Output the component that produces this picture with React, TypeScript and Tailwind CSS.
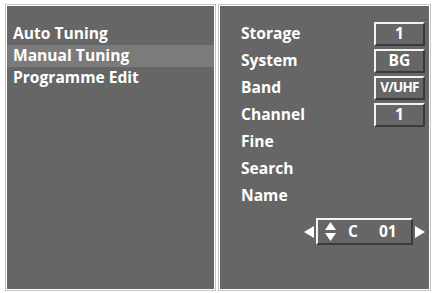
import React from "react";

const font = { fontFamily: '"Open Sans", "Noto Sans", sans-serif' };

function ValBox({ children, narrow }: { children: React.ReactNode; narrow?: boolean }) {
  return (
    <div className="w-[51px] h-[24px] flex items-center justify-center border-t-2 border-l-2 border-t-[#f2f2f2] border-l-[#f2f2f2] border-b-2 border-r-2 border-b-[#3a3a3a] border-r-[#3a3a3a] bg-[#666]">
      <span className={narrow ? "text-[13.5px] tracking-[-0.8px]" : "text-[15.6px]"}>{children}</span>
    </div>
  );
}

export default function App() {
  const rows: [string, React.ReactNode][] = [
    ["Storage", <ValBox>1</ValBox>],
    ["System", <ValBox>BG</ValBox>],
    ["Band", <ValBox narrow>V/UHF</ValBox>],
    ["Channel", <ValBox>1</ValBox>],
    ["Fine", null],
    ["Search", null],
    ["Name", null],
  ];
  return (
    <div className="w-[435px] h-[293px] bg-white flex gap-[2px] pl-[5px] pt-[4px] text-white font-bold" style={font}>
      <div className="w-[211px] h-[287px] border border-[#c4c4c4] p-[1px]">
        <div className="w-full h-full bg-[#666] pt-[17px]">
          <div className="h-[22px] flex items-center pl-[6px] text-[15.6px]">Auto Tuning</div>
          <div className="h-[22px] flex items-center pl-[6px] text-[15.6px] bg-[#7b7b7b]">Manual Tuning</div>
          <div className="h-[22px] flex items-center pl-[6px] text-[15.6px]">Programme Edit</div>
        </div>
      </div>
      <div className="w-[213px] h-[287px] border border-[#c4c4c4] p-[1px]">
        <div className="w-full h-full bg-[#666] pt-[14px] pl-[21px] pr-[4px]">
          {rows.map(([label, val]) => (
            <div key={label} className="h-[27px] flex items-center justify-between text-[15.6px]">
              <span>{label}</span>
              {val}
            </div>
          ))}
          <div className="mt-[9px] flex items-center justify-end gap-[2px]">
            <svg width="10" height="12" viewBox="0 0 10 12"><path d="M10 0 L0 6 L10 12 Z" fill="#fff" /></svg>
            <div className="w-[97px] h-[27px] flex items-center border-t-2 border-l-2 border-t-[#f2f2f2] border-l-[#f2f2f2] border-b-2 border-r-2 border-b-[#3a3a3a] border-r-[#3a3a3a] pl-[7px] text-[15.6px]">
              <svg width="11" height="19" viewBox="0 0 11 19">
                <path d="M5.5 0 L11 8 L0 8 Z" fill="#fff" />
                <path d="M0 11 L11 11 L5.5 19 Z" fill="#fff" />
              </svg>
              <span className="ml-[12px]">C</span>
              <span className="ml-[21px]">01</span>
            </div>
            <svg width="10" height="12" viewBox="0 0 10 12"><path d="M0 0 L10 6 L0 12 Z" fill="#fff" /></svg>
          </div>
        </div>
      </div>
    </div>
  );
}
